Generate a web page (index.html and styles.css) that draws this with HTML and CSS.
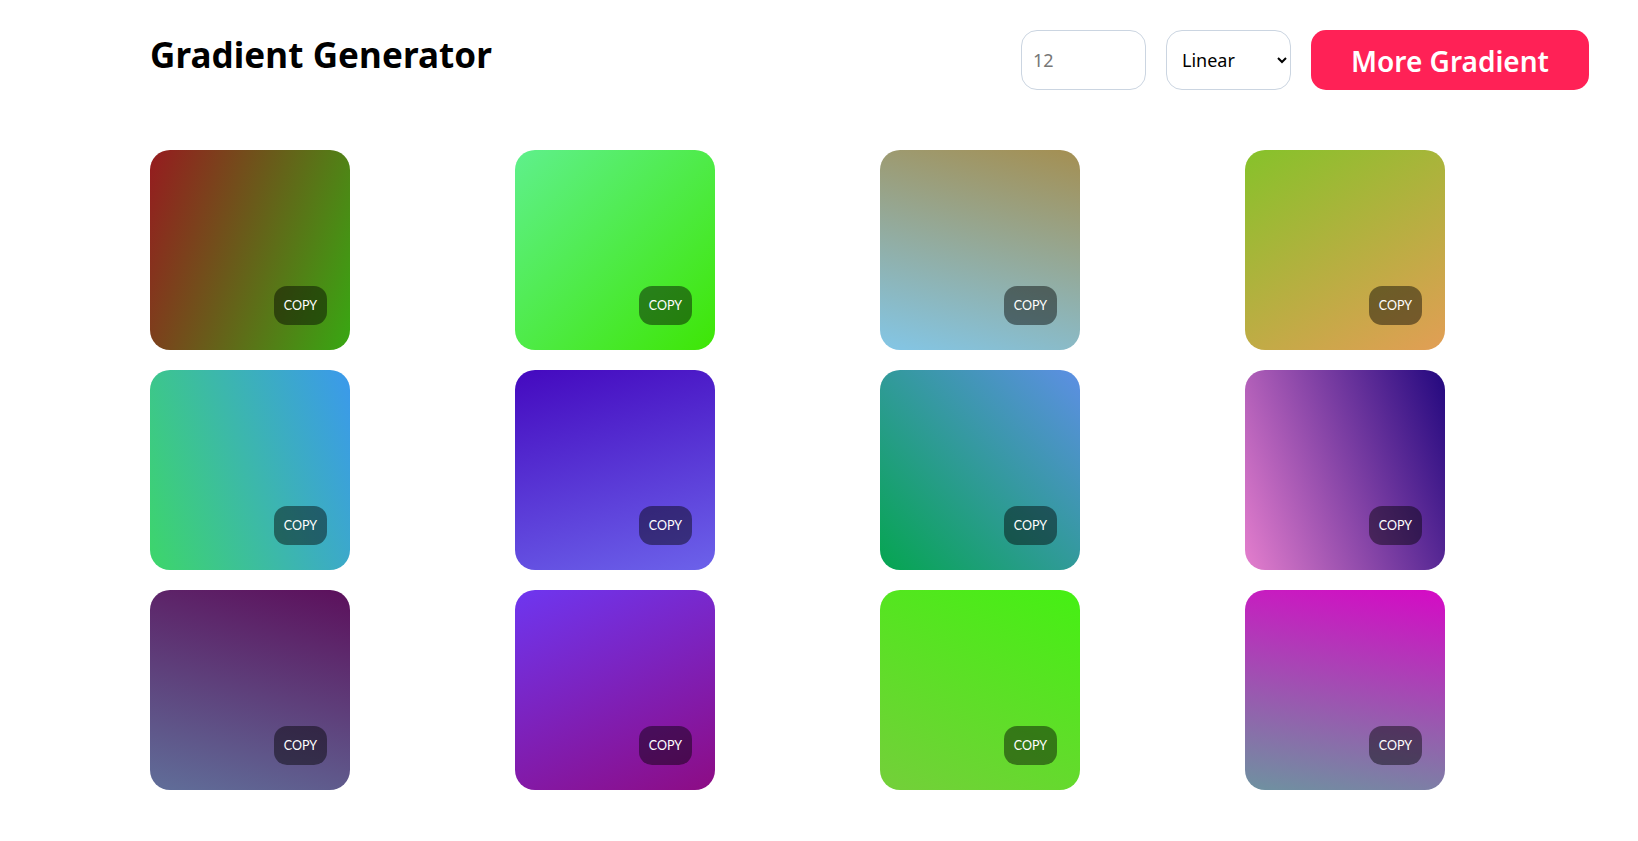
FILE: index.html
```html
<!DOCTYPE html>
<html lang="en">
<head>
<meta charset="utf-8">
<title>Gradient Generator</title>
<link rel="stylesheet" href="styles.css">
</head>
<body>
<div class="page">
  <header class="header">
    <h1 class="title">Gradient Generator</h1>
    <div class="controls">
      <input class="count" type="text" placeholder="12">
      <select class="type">
        <option>Linear</option>
        <option>Radial</option>
      </select>
      <button class="more">More Gradient</button>
    </div>
  </header>
  <main class="grid">
    <div class="card g1"><button class="copy">COPY</button></div>
    <div class="card g2"><button class="copy">COPY</button></div>
    <div class="card g3"><button class="copy">COPY</button></div>
    <div class="card g4"><button class="copy">COPY</button></div>
    <div class="card g5"><button class="copy">COPY</button></div>
    <div class="card g6"><button class="copy">COPY</button></div>
    <div class="card g7"><button class="copy">COPY</button></div>
    <div class="card g8"><button class="copy">COPY</button></div>
    <div class="card g9"><button class="copy">COPY</button></div>
    <div class="card g10"><button class="copy">COPY</button></div>
    <div class="card g11"><button class="copy">COPY</button></div>
    <div class="card g12"><button class="copy">COPY</button></div>
  </main>
</div>
</body>
</html>
```

FILE: styles.css
```css
* { box-sizing: border-box; }
html, body { margin: 0; padding: 0; background: #fff; }
body { font-family: "Open Sans", "Noto Sans", sans-serif; color: #000; }

.page {
  width: 1440px;
  margin-left: 150px;
  padding-top: 30px;
}

.header {
  display: flex;
  justify-content: space-between;
  align-items: flex-start;
  height: 60px;
}

.title {
  margin: 3px 0 0;
  font-family: "Noto Sans", "Open Sans", sans-serif;
  font-size: 35px;
  font-weight: 700;
  line-height: 44px;
  letter-spacing: 0.1px;
}

.controls {
  display: flex;
  gap: 20px;
  align-items: center;
  margin-right: 1px;
}

.count, .type {
  width: 125px;
  height: 60px;
  border: 1px solid #cbd5e1;
  border-radius: 16px;
  background: #fff;
  font-family: "Noto Sans", sans-serif;
  font-size: 18px;
  color: #000;
  padding: 0 11px;
  outline: none;
}
.count::placeholder { color: #777; }
.type { padding-left: 11px; }

.more {
  width: 278px;
  height: 60px;
  border: none;
  border-radius: 15px;
  background: #ff2156;
  color: #fff;
  font-family: "Noto Sans", sans-serif;
  font-size: 28px;
  font-weight: 600;
  padding-top: 2px;
  cursor: pointer;
}

.grid {
  margin-top: 60px;
  display: grid;
  grid-template-columns: repeat(4, 1fr);
  column-gap: 20px;
  row-gap: 20px;
}

.card {
  position: relative;
  width: 200px;
  height: 200px;
  border-radius: 20px;
}

.copy {
  position: absolute;
  right: 23px;
  bottom: 25px;
  width: 53px;
  height: 39px;
  border: none;
  border-radius: 13px;
  background: rgba(0, 0, 0, 0.45);
  color: #fff;
  font-family: Lato, sans-serif;
  font-size: 12.5px;
  padding: 0;
}

.g1 { background: linear-gradient(110deg, #961b1f, #6a5a1a 45%, #38a812); }
.g2 { background: linear-gradient(135deg, #5ff08c, #3ee605); }
.g3 { background: linear-gradient(195deg, #a48f52, #83c6e6); }
.g4 { background: linear-gradient(150deg, #86c22a, #e29e55); }
.g5 { background: linear-gradient(70deg, #3dd66a, #3b99ec); }
.g6 { background: linear-gradient(165deg, #4409bf, #6c62ea); }
.g7 { background: linear-gradient(45deg, #05a550, #5d8fe4); }
.g8 { background: linear-gradient(70deg, #e47ecd, #23087f); }
.g9 { background: linear-gradient(15deg, #606e99, #5c105c); }
.g10 { background: linear-gradient(155deg, #6e36f0, #8d0c84); }
.g11 { background: linear-gradient(25deg, #74cf3a, #45f013); }
.g12 { background: linear-gradient(10deg, #6e92a0, #d50ac5); }
```
